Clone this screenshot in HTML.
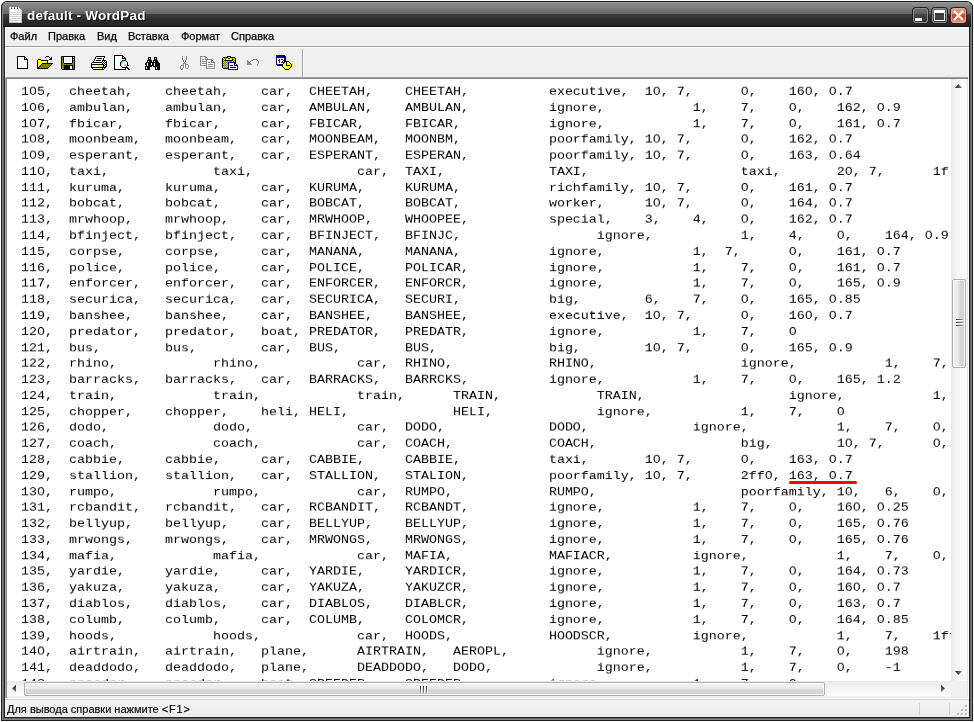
<!DOCTYPE html><html><head><meta charset="utf-8"><title>default - WordPad</title><style>
*{box-sizing:border-box;margin:0;padding:0}
html,body{width:974px;height:722px;background:#fff;overflow:hidden}
body{position:relative;font-family:"Liberation Sans",sans-serif;font-size:11px;color:#000}
.a{position:absolute}
/* window frame */
#root{left:0;top:0;width:974px;height:722px;will-change:transform}
#f0{left:1px;top:1px;width:972px;height:720px;background:#1c1c1c;border-radius:6px 6px 0 0}
#f1{left:2px;top:2px;width:970px;height:718px;background:#858585;border-radius:5px 5px 0 0}
#f2{left:3px;top:3px;width:968px;height:716px;background:#626262;border-radius:4px 4px 0 0}
#f3{left:4px;top:4px;width:966px;height:714px;background:#242424}
#title{left:3px;top:2px;width:968px;height:25px;border-radius:4px 4px 0 0;
 background:linear-gradient(to bottom,#9c9c9c 0,#9c9c9c 1px,#8c8c8c 1px,#7c7c7c 6px,#686868 11px,#646464 12px,#3e3e3e 12px,#2c2c2c 18px,#232323 24px,#0c0c0c 24px,#0c0c0c 25px)}
#ttext{left:27px;top:7px;height:18px;line-height:18px;font-weight:bold;font-size:13.5px;letter-spacing:0.2px;color:#fff;white-space:pre;
 text-shadow:1px 1px 0 #111;transform-origin:0 50%}
#client{left:5px;top:27px;width:964px;height:690px;background:#f0f0f0}
.mi{top:30px;height:13px;line-height:13px;font-size:11px;white-space:pre;-webkit-text-stroke:0.25px #000}
#edit{left:7px;top:79px;width:944px;height:602px;background:#fff;overflow:hidden}
#txt{left:14px;top:5px;will-change:transform;font-family:"Liberation Mono",monospace;font-size:13.3333px;line-height:17.7778px;white-space:pre;
 transform:scaleY(0.9);transform-origin:0 0;color:#000}
</style></head><body>
<div class="a" id="root">
<div class="a" id="f0"></div><div class="a" id="f1"></div><div class="a" id="f2"></div><div class="a" id="f3"></div>
<div class="a" id="title"></div>
<svg class="a" style="left:8px;top:6px" width="16" height="18" viewBox="8 6 16 18" shape-rendering="crispEdges"><rect x="9" y="7" width="13" height="16" fill="#c4c4c4"/><rect x="10" y="7" width="11" height="15" fill="#fdfdfd"/><rect x="10" y="12" width="11" height="1" fill="#c6d6e2"/><rect x="10" y="14" width="11" height="1" fill="#c6d6e2"/><rect x="10" y="16" width="11" height="1" fill="#c6d6e2"/><rect x="10" y="18" width="11" height="1" fill="#c6d6e2"/><rect x="10" y="20" width="11" height="1" fill="#c6d6e2"/><rect x="11" y="8" width="1" height="1" fill="#3a3a3a"/><rect x="11" y="7" width="1" height="1" fill="#9a9a9a"/><rect x="14" y="8" width="1" height="1" fill="#3a3a3a"/><rect x="14" y="7" width="1" height="1" fill="#9a9a9a"/><rect x="17" y="8" width="1" height="1" fill="#3a3a3a"/><rect x="17" y="7" width="1" height="1" fill="#9a9a9a"/><polygon points="18,7 22,7 22,11" fill="#7e7e7e"/><polygon points="18,7 18,11 22,11" fill="#d8d8d8"/><rect x="19" y="9" width="1" height="1" fill="#fff"/></svg>
<div class="a" id="ttext">default - WordPad</div>
<div class="a" style="left:912px;top:7px;width:17px;height:17px;border-radius:4px;background:#222"></div><div class="a" style="left:913px;top:8px;width:15px;height:15px;border-radius:3px;background:#8c8c8c"></div><div class="a" style="left:914px;top:9px;width:13px;height:13px;border-radius:2px;background:linear-gradient(to bottom,#6c6c6c 0,#5e5e5e 38%,#444 42%,#343434 100%)"></div><div class="a" style="left:915px;top:18px;width:7px;height:3px;background:#fff"></div><div class="a" style="left:931px;top:7px;width:17px;height:17px;border-radius:4px;background:#222"></div><div class="a" style="left:932px;top:8px;width:15px;height:15px;border-radius:3px;background:#8c8c8c"></div><div class="a" style="left:933px;top:9px;width:13px;height:13px;border-radius:2px;background:linear-gradient(to bottom,#6c6c6c 0,#5e5e5e 38%,#444 42%,#343434 100%)"></div><div class="a" style="left:934px;top:10px;width:11px;height:11px;border:1px solid #fff;border-top-width:3px;background:#404040"></div><div class="a" style="left:950px;top:7px;width:17px;height:17px;border-radius:4px;background:#222"></div><div class="a" style="left:951px;top:8px;width:15px;height:15px;border-radius:3px;background:#f0a494"></div><div class="a" style="left:952px;top:9px;width:13px;height:13px;border-radius:2px;background:linear-gradient(to bottom,#de9a88 0,#d98672 38%,#dd4a1a 42%,#dc4c1c 66%,#e27a5c 84%,#e99580 100%)"></div><svg class="a" style="left:951px;top:8px" width="15" height="15" viewBox="0 0 15 15"><path d="M3 3 L12 12 M12 3 L3 12" stroke="#fff" stroke-width="2.2" stroke-linecap="butt"/></svg>
<div class="a" id="client"></div>
<div class="a" style="left:5px;top:27px;width:964px;height:1px;background:#fff"></div>
<div class="a" style="left:5px;top:27px;width:1px;height:50px;background:#fff"></div>
<div class="a mi" style="left:10px">Файл</div>
<div class="a mi" style="left:48px">Правка</div>
<div class="a mi" style="left:97px">Вид</div>
<div class="a mi" style="left:128px">Вставка</div>
<div class="a mi" style="left:181px">Формат</div>
<div class="a mi" style="left:231px">Справка</div>
<div class="a" style="left:5px;top:46px;width:964px;height:1px;background:#a0a0a0"></div>
<div class="a" style="left:5px;top:47px;width:964px;height:1px;background:#fff"></div>
<div class="a" style="left:302px;top:49px;width:1px;height:28px;background:#a0a0a0"></div>
<div class="a" style="left:303px;top:49px;width:1px;height:28px;background:#fff"></div>
<svg class="a" style="left:0;top:48px" width="310" height="29" viewBox="0 48 310 29" shape-rendering="crispEdges"><rect x="17" y="56" width="8" height="1" fill="#000"/><rect x="17" y="57" width="1" height="1" fill="#000"/><rect x="18" y="57" width="6" height="1" fill="#fff"/><rect x="24" y="57" width="2" height="1" fill="#000"/><rect x="17" y="58" width="1" height="1" fill="#000"/><rect x="18" y="58" width="6" height="1" fill="#fff"/><rect x="24" y="58" width="1" height="1" fill="#000"/><rect x="25" y="58" width="1" height="1" fill="#fff"/><rect x="26" y="58" width="1" height="1" fill="#000"/><rect x="17" y="59" width="1" height="1" fill="#000"/><rect x="18" y="59" width="6" height="1" fill="#fff"/><rect x="24" y="59" width="4" height="1" fill="#000"/><rect x="17" y="60" width="1" height="1" fill="#000"/><rect x="18" y="60" width="9" height="1" fill="#fff"/><rect x="27" y="60" width="1" height="1" fill="#000"/><rect x="17" y="61" width="1" height="1" fill="#000"/><rect x="18" y="61" width="9" height="1" fill="#fff"/><rect x="27" y="61" width="1" height="1" fill="#000"/><rect x="17" y="62" width="1" height="1" fill="#000"/><rect x="18" y="62" width="9" height="1" fill="#fff"/><rect x="27" y="62" width="1" height="1" fill="#000"/><rect x="17" y="63" width="1" height="1" fill="#000"/><rect x="18" y="63" width="9" height="1" fill="#fff"/><rect x="27" y="63" width="1" height="1" fill="#000"/><rect x="17" y="64" width="1" height="1" fill="#000"/><rect x="18" y="64" width="9" height="1" fill="#fff"/><rect x="27" y="64" width="1" height="1" fill="#000"/><rect x="17" y="65" width="1" height="1" fill="#000"/><rect x="18" y="65" width="9" height="1" fill="#fff"/><rect x="27" y="65" width="1" height="1" fill="#000"/><rect x="17" y="66" width="1" height="1" fill="#000"/><rect x="18" y="66" width="9" height="1" fill="#fff"/><rect x="27" y="66" width="1" height="1" fill="#000"/><rect x="17" y="67" width="1" height="1" fill="#000"/><rect x="18" y="67" width="9" height="1" fill="#fff"/><rect x="27" y="67" width="1" height="1" fill="#000"/><rect x="17" y="68" width="11" height="1" fill="#000"/><rect x="46" y="56" width="3" height="1" fill="#000"/><rect x="45" y="57" width="1" height="1" fill="#000"/><rect x="49" y="57" width="1" height="1" fill="#000"/><rect x="51" y="57" width="1" height="1" fill="#000"/><rect x="50" y="58" width="2" height="1" fill="#000"/><rect x="38" y="59" width="3" height="1" fill="#000"/><rect x="49" y="59" width="3" height="1" fill="#000"/><rect x="37" y="60" width="1" height="1" fill="#000"/><rect x="38" y="60" width="1" height="1" fill="#ffff00"/><rect x="39" y="60" width="1" height="1" fill="#fff"/><rect x="40" y="60" width="1" height="1" fill="#ffff00"/><rect x="41" y="60" width="7" height="1" fill="#000"/><rect x="37" y="61" width="1" height="1" fill="#000"/><rect x="38" y="61" width="1" height="1" fill="#fff"/><rect x="39" y="61" width="1" height="1" fill="#ffff00"/><rect x="40" y="61" width="1" height="1" fill="#fff"/><rect x="41" y="61" width="1" height="1" fill="#ffff00"/><rect x="42" y="61" width="1" height="1" fill="#fff"/><rect x="43" y="61" width="1" height="1" fill="#ffff00"/><rect x="44" y="61" width="1" height="1" fill="#fff"/><rect x="45" y="61" width="1" height="1" fill="#ffff00"/><rect x="46" y="61" width="1" height="1" fill="#fff"/><rect x="47" y="61" width="1" height="1" fill="#000"/><rect x="37" y="62" width="1" height="1" fill="#000"/><rect x="38" y="62" width="1" height="1" fill="#ffff00"/><rect x="39" y="62" width="1" height="1" fill="#fff"/><rect x="40" y="62" width="1" height="1" fill="#ffff00"/><rect x="41" y="62" width="1" height="1" fill="#fff"/><rect x="42" y="62" width="1" height="1" fill="#ffff00"/><rect x="43" y="62" width="1" height="1" fill="#fff"/><rect x="44" y="62" width="1" height="1" fill="#ffff00"/><rect x="45" y="62" width="1" height="1" fill="#fff"/><rect x="46" y="62" width="1" height="1" fill="#ffff00"/><rect x="47" y="62" width="1" height="1" fill="#000"/><rect x="37" y="63" width="1" height="1" fill="#000"/><rect x="38" y="63" width="1" height="1" fill="#fff"/><rect x="39" y="63" width="1" height="1" fill="#ffff00"/><rect x="40" y="63" width="1" height="1" fill="#fff"/><rect x="41" y="63" width="1" height="1" fill="#ffff00"/><rect x="42" y="63" width="11" height="1" fill="#000"/><rect x="37" y="64" width="1" height="1" fill="#000"/><rect x="38" y="64" width="1" height="1" fill="#ffff00"/><rect x="39" y="64" width="1" height="1" fill="#fff"/><rect x="40" y="64" width="1" height="1" fill="#ffff00"/><rect x="41" y="64" width="1" height="1" fill="#000"/><rect x="42" y="64" width="9" height="1" fill="#808000"/><rect x="51" y="64" width="1" height="1" fill="#000"/><rect x="37" y="65" width="1" height="1" fill="#000"/><rect x="38" y="65" width="1" height="1" fill="#fff"/><rect x="39" y="65" width="1" height="1" fill="#ffff00"/><rect x="40" y="65" width="1" height="1" fill="#000"/><rect x="41" y="65" width="9" height="1" fill="#808000"/><rect x="50" y="65" width="1" height="1" fill="#000"/><rect x="37" y="66" width="1" height="1" fill="#000"/><rect x="38" y="66" width="1" height="1" fill="#ffff00"/><rect x="39" y="66" width="1" height="1" fill="#000"/><rect x="40" y="66" width="9" height="1" fill="#808000"/><rect x="49" y="66" width="1" height="1" fill="#000"/><rect x="37" y="67" width="2" height="1" fill="#000"/><rect x="39" y="67" width="9" height="1" fill="#808000"/><rect x="48" y="67" width="1" height="1" fill="#000"/><rect x="37" y="68" width="11" height="1" fill="#000"/><rect x="61" y="56" width="14" height="1" fill="#000"/><rect x="61" y="57" width="1" height="1" fill="#000"/><rect x="62" y="57" width="1" height="1" fill="#808000"/><rect x="63" y="57" width="1" height="1" fill="#000"/><rect x="64" y="57" width="8" height="1" fill="#fff"/><rect x="72" y="57" width="1" height="1" fill="#000"/><rect x="73" y="57" width="1" height="1" fill="#fff"/><rect x="74" y="57" width="1" height="1" fill="#000"/><rect x="61" y="58" width="1" height="1" fill="#000"/><rect x="62" y="58" width="1" height="1" fill="#808000"/><rect x="63" y="58" width="1" height="1" fill="#000"/><rect x="64" y="58" width="1" height="1" fill="#fff"/><rect x="65" y="58" width="6" height="1" fill="#f0f0f0"/><rect x="71" y="58" width="1" height="1" fill="#fff"/><rect x="72" y="58" width="3" height="1" fill="#000"/><rect x="61" y="59" width="1" height="1" fill="#000"/><rect x="62" y="59" width="1" height="1" fill="#808000"/><rect x="63" y="59" width="1" height="1" fill="#000"/><rect x="64" y="59" width="1" height="1" fill="#fff"/><rect x="65" y="59" width="6" height="1" fill="#f0f0f0"/><rect x="71" y="59" width="1" height="1" fill="#fff"/><rect x="72" y="59" width="1" height="1" fill="#000"/><rect x="73" y="59" width="1" height="1" fill="#808000"/><rect x="74" y="59" width="1" height="1" fill="#000"/><rect x="61" y="60" width="1" height="1" fill="#000"/><rect x="62" y="60" width="1" height="1" fill="#808000"/><rect x="63" y="60" width="1" height="1" fill="#000"/><rect x="64" y="60" width="1" height="1" fill="#fff"/><rect x="65" y="60" width="6" height="1" fill="#f0f0f0"/><rect x="71" y="60" width="1" height="1" fill="#fff"/><rect x="72" y="60" width="1" height="1" fill="#000"/><rect x="73" y="60" width="1" height="1" fill="#808000"/><rect x="74" y="60" width="1" height="1" fill="#000"/><rect x="61" y="61" width="1" height="1" fill="#000"/><rect x="62" y="61" width="1" height="1" fill="#808000"/><rect x="63" y="61" width="1" height="1" fill="#000"/><rect x="64" y="61" width="1" height="1" fill="#fff"/><rect x="65" y="61" width="6" height="1" fill="#f0f0f0"/><rect x="71" y="61" width="1" height="1" fill="#fff"/><rect x="72" y="61" width="1" height="1" fill="#000"/><rect x="73" y="61" width="1" height="1" fill="#808000"/><rect x="74" y="61" width="1" height="1" fill="#000"/><rect x="61" y="62" width="1" height="1" fill="#000"/><rect x="62" y="62" width="1" height="1" fill="#808000"/><rect x="63" y="62" width="1" height="1" fill="#000"/><rect x="64" y="62" width="8" height="1" fill="#fff"/><rect x="72" y="62" width="1" height="1" fill="#000"/><rect x="73" y="62" width="1" height="1" fill="#808000"/><rect x="74" y="62" width="1" height="1" fill="#000"/><rect x="61" y="63" width="1" height="1" fill="#000"/><rect x="62" y="63" width="2" height="1" fill="#808000"/><rect x="64" y="63" width="8" height="1" fill="#000"/><rect x="72" y="63" width="2" height="1" fill="#808000"/><rect x="74" y="63" width="1" height="1" fill="#000"/><rect x="61" y="64" width="1" height="1" fill="#000"/><rect x="62" y="64" width="12" height="1" fill="#808000"/><rect x="74" y="64" width="1" height="1" fill="#000"/><rect x="61" y="65" width="1" height="1" fill="#000"/><rect x="62" y="65" width="2" height="1" fill="#808000"/><rect x="64" y="65" width="9" height="1" fill="#000"/><rect x="73" y="65" width="1" height="1" fill="#808000"/><rect x="74" y="65" width="1" height="1" fill="#000"/><rect x="61" y="66" width="1" height="1" fill="#000"/><rect x="62" y="66" width="2" height="1" fill="#808000"/><rect x="64" y="66" width="6" height="1" fill="#000"/><rect x="70" y="66" width="2" height="1" fill="#fff"/><rect x="72" y="66" width="1" height="1" fill="#000"/><rect x="73" y="66" width="1" height="1" fill="#808000"/><rect x="74" y="66" width="1" height="1" fill="#000"/><rect x="61" y="67" width="1" height="1" fill="#000"/><rect x="62" y="67" width="2" height="1" fill="#808000"/><rect x="64" y="67" width="6" height="1" fill="#000"/><rect x="70" y="67" width="2" height="1" fill="#fff"/><rect x="72" y="67" width="1" height="1" fill="#000"/><rect x="73" y="67" width="1" height="1" fill="#808000"/><rect x="74" y="67" width="1" height="1" fill="#000"/><rect x="61" y="68" width="1" height="1" fill="#000"/><rect x="62" y="68" width="2" height="1" fill="#808000"/><rect x="64" y="68" width="6" height="1" fill="#000"/><rect x="70" y="68" width="2" height="1" fill="#fff"/><rect x="72" y="68" width="1" height="1" fill="#000"/><rect x="73" y="68" width="1" height="1" fill="#808000"/><rect x="74" y="68" width="1" height="1" fill="#000"/><rect x="62" y="69" width="13" height="1" fill="#000"/><rect x="96" y="56" width="9" height="1" fill="#000"/><rect x="95" y="57" width="1" height="1" fill="#000"/><rect x="96" y="57" width="8" height="1" fill="#fff"/><rect x="104" y="57" width="1" height="1" fill="#000"/><rect x="95" y="58" width="1" height="1" fill="#000"/><rect x="96" y="58" width="1" height="1" fill="#fff"/><rect x="97" y="58" width="5" height="1" fill="#000"/><rect x="102" y="58" width="1" height="1" fill="#fff"/><rect x="103" y="58" width="1" height="1" fill="#000"/><rect x="94" y="59" width="1" height="1" fill="#000"/><rect x="95" y="59" width="8" height="1" fill="#fff"/><rect x="103" y="59" width="1" height="1" fill="#000"/><rect x="94" y="60" width="1" height="1" fill="#000"/><rect x="95" y="60" width="1" height="1" fill="#fff"/><rect x="96" y="60" width="5" height="1" fill="#000"/><rect x="101" y="60" width="1" height="1" fill="#fff"/><rect x="102" y="60" width="4" height="1" fill="#000"/><rect x="93" y="61" width="1" height="1" fill="#000"/><rect x="94" y="61" width="8" height="1" fill="#fff"/><rect x="102" y="61" width="1" height="1" fill="#000"/><rect x="103" y="61" width="1" height="1" fill="#fff"/><rect x="104" y="61" width="1" height="1" fill="#000"/><rect x="105" y="61" width="1" height="1" fill="#fff"/><rect x="106" y="61" width="1" height="1" fill="#000"/><rect x="92" y="62" width="10" height="1" fill="#000"/><rect x="102" y="62" width="1" height="1" fill="#fff"/><rect x="103" y="62" width="1" height="1" fill="#000"/><rect x="104" y="62" width="1" height="1" fill="#fff"/><rect x="105" y="62" width="2" height="1" fill="#000"/><rect x="91" y="63" width="1" height="1" fill="#000"/><rect x="92" y="63" width="10" height="1" fill="#fff"/><rect x="102" y="63" width="1" height="1" fill="#000"/><rect x="103" y="63" width="1" height="1" fill="#fff"/><rect x="104" y="63" width="1" height="1" fill="#000"/><rect x="105" y="63" width="1" height="1" fill="#fff"/><rect x="106" y="63" width="1" height="1" fill="#000"/><rect x="91" y="64" width="13" height="1" fill="#000"/><rect x="104" y="64" width="1" height="1" fill="#fff"/><rect x="105" y="64" width="2" height="1" fill="#000"/><rect x="91" y="65" width="1" height="1" fill="#000"/><rect x="92" y="65" width="6" height="1" fill="#fff"/><rect x="98" y="65" width="3" height="1" fill="#ffff00"/><rect x="101" y="65" width="2" height="1" fill="#fff"/><rect x="103" y="65" width="2" height="1" fill="#000"/><rect x="105" y="65" width="1" height="1" fill="#fff"/><rect x="106" y="65" width="1" height="1" fill="#000"/><rect x="91" y="66" width="1" height="1" fill="#000"/><rect x="92" y="66" width="6" height="1" fill="#fff"/><rect x="98" y="66" width="3" height="1" fill="#ffff00"/><rect x="101" y="66" width="2" height="1" fill="#fff"/><rect x="103" y="66" width="1" height="1" fill="#000"/><rect x="104" y="66" width="1" height="1" fill="#fff"/><rect x="105" y="66" width="2" height="1" fill="#000"/><rect x="91" y="67" width="15" height="1" fill="#000"/><rect x="92" y="68" width="1" height="1" fill="#000"/><rect x="93" y="68" width="9" height="1" fill="#fff"/><rect x="102" y="68" width="1" height="1" fill="#000"/><rect x="103" y="68" width="1" height="1" fill="#fff"/><rect x="104" y="68" width="1" height="1" fill="#000"/><rect x="93" y="69" width="11" height="1" fill="#000"/><rect x="114" y="55" width="9" height="1" fill="#000"/><rect x="114" y="56" width="1" height="1" fill="#000"/><rect x="115" y="56" width="7" height="1" fill="#fff"/><rect x="122" y="56" width="2" height="1" fill="#000"/><rect x="114" y="57" width="1" height="1" fill="#000"/><rect x="115" y="57" width="7" height="1" fill="#fff"/><rect x="122" y="57" width="1" height="1" fill="#000"/><rect x="123" y="57" width="1" height="1" fill="#fff"/><rect x="124" y="57" width="1" height="1" fill="#000"/><rect x="114" y="58" width="1" height="1" fill="#000"/><rect x="115" y="58" width="7" height="1" fill="#fff"/><rect x="122" y="58" width="4" height="1" fill="#000"/><rect x="114" y="59" width="1" height="1" fill="#000"/><rect x="115" y="59" width="10" height="1" fill="#fff"/><rect x="125" y="59" width="1" height="1" fill="#000"/><rect x="114" y="60" width="1" height="1" fill="#000"/><rect x="115" y="60" width="7" height="1" fill="#fff"/><rect x="122" y="60" width="4" height="1" fill="#000"/><rect x="114" y="61" width="1" height="1" fill="#000"/><rect x="115" y="61" width="6" height="1" fill="#fff"/><rect x="121" y="61" width="1" height="1" fill="#000"/><rect x="122" y="61" width="1" height="1" fill="#00ffff"/><rect x="123" y="61" width="1" height="1" fill="#fff"/><rect x="124" y="61" width="2" height="1" fill="#f6eeee"/><rect x="126" y="61" width="1" height="1" fill="#000"/><rect x="114" y="62" width="1" height="1" fill="#000"/><rect x="115" y="62" width="5" height="1" fill="#fff"/><rect x="120" y="62" width="1" height="1" fill="#000"/><rect x="121" y="62" width="2" height="1" fill="#00ffff"/><rect x="123" y="62" width="3" height="1" fill="#f6eeee"/><rect x="126" y="62" width="1" height="1" fill="#fff"/><rect x="127" y="62" width="1" height="1" fill="#000"/><rect x="114" y="63" width="1" height="1" fill="#000"/><rect x="115" y="63" width="5" height="1" fill="#fff"/><rect x="120" y="63" width="1" height="1" fill="#000"/><rect x="121" y="63" width="1" height="1" fill="#00ffff"/><rect x="122" y="63" width="1" height="1" fill="#fff"/><rect x="123" y="63" width="3" height="1" fill="#f6eeee"/><rect x="126" y="63" width="1" height="1" fill="#fff"/><rect x="127" y="63" width="1" height="1" fill="#000"/><rect x="114" y="64" width="1" height="1" fill="#000"/><rect x="115" y="64" width="5" height="1" fill="#fff"/><rect x="120" y="64" width="1" height="1" fill="#000"/><rect x="121" y="64" width="4" height="1" fill="#f6eeee"/><rect x="125" y="64" width="1" height="1" fill="#00ffff"/><rect x="126" y="64" width="1" height="1" fill="#fff"/><rect x="127" y="64" width="1" height="1" fill="#000"/><rect x="114" y="65" width="1" height="1" fill="#000"/><rect x="115" y="65" width="5" height="1" fill="#fff"/><rect x="120" y="65" width="1" height="1" fill="#000"/><rect x="121" y="65" width="3" height="1" fill="#f6eeee"/><rect x="124" y="65" width="2" height="1" fill="#00ffff"/><rect x="126" y="65" width="1" height="1" fill="#fff"/><rect x="127" y="65" width="2" height="1" fill="#000"/><rect x="114" y="66" width="1" height="1" fill="#000"/><rect x="115" y="66" width="6" height="1" fill="#fff"/><rect x="121" y="66" width="1" height="1" fill="#000"/><rect x="122" y="66" width="4" height="1" fill="#f6eeee"/><rect x="126" y="66" width="1" height="1" fill="#000"/><rect x="114" y="67" width="1" height="1" fill="#000"/><rect x="115" y="67" width="7" height="1" fill="#fff"/><rect x="122" y="67" width="6" height="1" fill="#000"/><rect x="114" y="68" width="1" height="1" fill="#000"/><rect x="115" y="68" width="10" height="1" fill="#fff"/><rect x="125" y="68" width="1" height="1" fill="#000"/><rect x="127" y="68" width="2" height="1" fill="#000"/><rect x="114" y="69" width="12" height="1" fill="#000"/><rect x="128" y="69" width="2" height="1" fill="#000"/><rect x="148" y="57" width="3" height="1" fill="#000"/><rect x="154" y="57" width="3" height="1" fill="#000"/><rect x="148" y="58" width="1" height="1" fill="#000"/><rect x="149" y="58" width="1" height="1" fill="#fff"/><rect x="150" y="58" width="1" height="1" fill="#000"/><rect x="154" y="58" width="1" height="1" fill="#000"/><rect x="155" y="58" width="1" height="1" fill="#fff"/><rect x="156" y="58" width="1" height="1" fill="#000"/><rect x="148" y="59" width="3" height="1" fill="#000"/><rect x="154" y="59" width="3" height="1" fill="#000"/><rect x="147" y="60" width="5" height="1" fill="#000"/><rect x="153" y="60" width="5" height="1" fill="#000"/><rect x="147" y="61" width="1" height="1" fill="#000"/><rect x="148" y="61" width="1" height="1" fill="#fff"/><rect x="149" y="61" width="3" height="1" fill="#000"/><rect x="153" y="61" width="1" height="1" fill="#000"/><rect x="154" y="61" width="1" height="1" fill="#fff"/><rect x="155" y="61" width="3" height="1" fill="#000"/><rect x="146" y="62" width="13" height="1" fill="#000"/><rect x="145" y="63" width="2" height="1" fill="#000"/><rect x="147" y="63" width="1" height="1" fill="#fff"/><rect x="148" y="63" width="3" height="1" fill="#000"/><rect x="151" y="63" width="1" height="1" fill="#fff"/><rect x="152" y="63" width="2" height="1" fill="#000"/><rect x="154" y="63" width="1" height="1" fill="#fff"/><rect x="155" y="63" width="5" height="1" fill="#000"/><rect x="145" y="64" width="2" height="1" fill="#000"/><rect x="147" y="64" width="1" height="1" fill="#fff"/><rect x="148" y="64" width="3" height="1" fill="#000"/><rect x="151" y="64" width="1" height="1" fill="#fff"/><rect x="152" y="64" width="2" height="1" fill="#000"/><rect x="154" y="64" width="1" height="1" fill="#fff"/><rect x="155" y="64" width="5" height="1" fill="#000"/><rect x="146" y="65" width="1" height="1" fill="#000"/><rect x="147" y="65" width="1" height="1" fill="#fff"/><rect x="148" y="65" width="6" height="1" fill="#000"/><rect x="154" y="65" width="1" height="1" fill="#fff"/><rect x="155" y="65" width="5" height="1" fill="#000"/><rect x="145" y="66" width="7" height="1" fill="#000"/><rect x="153" y="66" width="7" height="1" fill="#000"/><rect x="145" y="67" width="1" height="1" fill="#000"/><rect x="146" y="67" width="1" height="1" fill="#fff"/><rect x="147" y="67" width="3" height="1" fill="#000"/><rect x="155" y="67" width="1" height="1" fill="#000"/><rect x="156" y="67" width="1" height="1" fill="#fff"/><rect x="157" y="67" width="3" height="1" fill="#000"/><rect x="145" y="68" width="1" height="1" fill="#000"/><rect x="146" y="68" width="1" height="1" fill="#fff"/><rect x="147" y="68" width="3" height="1" fill="#000"/><rect x="155" y="68" width="1" height="1" fill="#000"/><rect x="156" y="68" width="1" height="1" fill="#fff"/><rect x="157" y="68" width="3" height="1" fill="#000"/><rect x="145" y="69" width="5" height="1" fill="#000"/><rect x="155" y="69" width="5" height="1" fill="#000"/><rect x="183" y="57" width="1" height="1" fill="#fff"/><rect x="187" y="57" width="1" height="1" fill="#fff"/><rect x="183" y="58" width="1" height="1" fill="#fff"/><rect x="187" y="58" width="1" height="1" fill="#fff"/><rect x="183" y="59" width="1" height="1" fill="#fff"/><rect x="187" y="59" width="1" height="1" fill="#fff"/><rect x="183" y="60" width="1" height="1" fill="#fff"/><rect x="187" y="60" width="1" height="1" fill="#fff"/><rect x="184" y="61" width="1" height="1" fill="#fff"/><rect x="186" y="61" width="1" height="1" fill="#fff"/><rect x="184" y="62" width="1" height="1" fill="#fff"/><rect x="186" y="62" width="1" height="1" fill="#fff"/><rect x="185" y="63" width="1" height="1" fill="#fff"/><rect x="184" y="64" width="3" height="1" fill="#fff"/><rect x="184" y="65" width="1" height="1" fill="#fff"/><rect x="186" y="65" width="3" height="1" fill="#fff"/><rect x="182" y="66" width="3" height="1" fill="#fff"/><rect x="186" y="66" width="1" height="1" fill="#fff"/><rect x="189" y="66" width="1" height="1" fill="#fff"/><rect x="181" y="67" width="1" height="1" fill="#fff"/><rect x="184" y="67" width="1" height="1" fill="#fff"/><rect x="186" y="67" width="1" height="1" fill="#fff"/><rect x="189" y="67" width="1" height="1" fill="#fff"/><rect x="181" y="68" width="1" height="1" fill="#fff"/><rect x="184" y="68" width="1" height="1" fill="#fff"/><rect x="186" y="68" width="1" height="1" fill="#fff"/><rect x="189" y="68" width="1" height="1" fill="#fff"/><rect x="181" y="69" width="1" height="1" fill="#fff"/><rect x="183" y="69" width="1" height="1" fill="#fff"/><rect x="187" y="69" width="2" height="1" fill="#fff"/><rect x="182" y="70" width="2" height="1" fill="#fff"/><rect x="182" y="56" width="1" height="1" fill="#8a8a92"/><rect x="186" y="56" width="1" height="1" fill="#8a8a92"/><rect x="182" y="57" width="1" height="1" fill="#8a8a92"/><rect x="186" y="57" width="1" height="1" fill="#8a8a92"/><rect x="182" y="58" width="1" height="1" fill="#8a8a92"/><rect x="186" y="58" width="1" height="1" fill="#8a8a92"/><rect x="182" y="59" width="1" height="1" fill="#8a8a92"/><rect x="186" y="59" width="1" height="1" fill="#8a8a92"/><rect x="183" y="60" width="1" height="1" fill="#8a8a92"/><rect x="185" y="60" width="1" height="1" fill="#8a8a92"/><rect x="183" y="61" width="1" height="1" fill="#8a8a92"/><rect x="185" y="61" width="1" height="1" fill="#8a8a92"/><rect x="184" y="62" width="1" height="1" fill="#8a8a92"/><rect x="183" y="63" width="3" height="1" fill="#8a8a92"/><rect x="183" y="64" width="1" height="1" fill="#8a8a92"/><rect x="185" y="64" width="3" height="1" fill="#8a8a92"/><rect x="181" y="65" width="3" height="1" fill="#8a8a92"/><rect x="185" y="65" width="1" height="1" fill="#8a8a92"/><rect x="188" y="65" width="1" height="1" fill="#8a8a92"/><rect x="180" y="66" width="1" height="1" fill="#8a8a92"/><rect x="183" y="66" width="1" height="1" fill="#8a8a92"/><rect x="185" y="66" width="1" height="1" fill="#8a8a92"/><rect x="188" y="66" width="1" height="1" fill="#8a8a92"/><rect x="180" y="67" width="1" height="1" fill="#8a8a92"/><rect x="183" y="67" width="1" height="1" fill="#8a8a92"/><rect x="185" y="67" width="1" height="1" fill="#8a8a92"/><rect x="188" y="67" width="1" height="1" fill="#8a8a92"/><rect x="180" y="68" width="1" height="1" fill="#8a8a92"/><rect x="182" y="68" width="1" height="1" fill="#8a8a92"/><rect x="186" y="68" width="2" height="1" fill="#8a8a92"/><rect x="181" y="69" width="2" height="1" fill="#8a8a92"/><rect x="201" y="57" width="6" height="1" fill="#fff"/><rect x="201" y="58" width="1" height="1" fill="#fff"/><rect x="206" y="58" width="2" height="1" fill="#fff"/><rect x="201" y="59" width="1" height="1" fill="#fff"/><rect x="206" y="59" width="1" height="1" fill="#fff"/><rect x="208" y="59" width="1" height="1" fill="#fff"/><rect x="201" y="60" width="1" height="1" fill="#fff"/><rect x="203" y="60" width="2" height="1" fill="#fff"/><rect x="206" y="60" width="7" height="1" fill="#fff"/><rect x="201" y="61" width="1" height="1" fill="#fff"/><rect x="207" y="61" width="1" height="1" fill="#fff"/><rect x="212" y="61" width="2" height="1" fill="#fff"/><rect x="201" y="62" width="1" height="1" fill="#fff"/><rect x="203" y="62" width="5" height="1" fill="#fff"/><rect x="212" y="62" width="1" height="1" fill="#fff"/><rect x="214" y="62" width="1" height="1" fill="#fff"/><rect x="201" y="63" width="1" height="1" fill="#fff"/><rect x="207" y="63" width="1" height="1" fill="#fff"/><rect x="209" y="63" width="2" height="1" fill="#fff"/><rect x="212" y="63" width="4" height="1" fill="#fff"/><rect x="201" y="64" width="1" height="1" fill="#fff"/><rect x="203" y="64" width="5" height="1" fill="#fff"/><rect x="215" y="64" width="1" height="1" fill="#fff"/><rect x="201" y="65" width="1" height="1" fill="#fff"/><rect x="207" y="65" width="1" height="1" fill="#fff"/><rect x="209" y="65" width="5" height="1" fill="#fff"/><rect x="215" y="65" width="1" height="1" fill="#fff"/><rect x="201" y="66" width="7" height="1" fill="#fff"/><rect x="215" y="66" width="1" height="1" fill="#fff"/><rect x="207" y="67" width="1" height="1" fill="#fff"/><rect x="209" y="67" width="5" height="1" fill="#fff"/><rect x="215" y="67" width="1" height="1" fill="#fff"/><rect x="207" y="68" width="1" height="1" fill="#fff"/><rect x="215" y="68" width="1" height="1" fill="#fff"/><rect x="207" y="69" width="9" height="1" fill="#fff"/><rect x="200" y="56" width="6" height="1" fill="#8a8a92"/><rect x="200" y="57" width="1" height="1" fill="#8a8a92"/><rect x="205" y="57" width="2" height="1" fill="#8a8a92"/><rect x="200" y="58" width="1" height="1" fill="#8a8a92"/><rect x="205" y="58" width="1" height="1" fill="#8a8a92"/><rect x="207" y="58" width="1" height="1" fill="#8a8a92"/><rect x="200" y="59" width="1" height="1" fill="#8a8a92"/><rect x="202" y="59" width="2" height="1" fill="#8a8a92"/><rect x="205" y="59" width="7" height="1" fill="#8a8a92"/><rect x="200" y="60" width="1" height="1" fill="#8a8a92"/><rect x="206" y="60" width="1" height="1" fill="#8a8a92"/><rect x="211" y="60" width="2" height="1" fill="#8a8a92"/><rect x="200" y="61" width="1" height="1" fill="#8a8a92"/><rect x="202" y="61" width="5" height="1" fill="#8a8a92"/><rect x="211" y="61" width="1" height="1" fill="#8a8a92"/><rect x="213" y="61" width="1" height="1" fill="#8a8a92"/><rect x="200" y="62" width="1" height="1" fill="#8a8a92"/><rect x="206" y="62" width="1" height="1" fill="#8a8a92"/><rect x="208" y="62" width="2" height="1" fill="#8a8a92"/><rect x="211" y="62" width="4" height="1" fill="#8a8a92"/><rect x="200" y="63" width="1" height="1" fill="#8a8a92"/><rect x="202" y="63" width="5" height="1" fill="#8a8a92"/><rect x="214" y="63" width="1" height="1" fill="#8a8a92"/><rect x="200" y="64" width="1" height="1" fill="#8a8a92"/><rect x="206" y="64" width="1" height="1" fill="#8a8a92"/><rect x="208" y="64" width="5" height="1" fill="#8a8a92"/><rect x="214" y="64" width="1" height="1" fill="#8a8a92"/><rect x="200" y="65" width="7" height="1" fill="#8a8a92"/><rect x="214" y="65" width="1" height="1" fill="#8a8a92"/><rect x="206" y="66" width="1" height="1" fill="#8a8a92"/><rect x="208" y="66" width="5" height="1" fill="#8a8a92"/><rect x="214" y="66" width="1" height="1" fill="#8a8a92"/><rect x="206" y="67" width="1" height="1" fill="#8a8a92"/><rect x="214" y="67" width="1" height="1" fill="#8a8a92"/><rect x="206" y="68" width="9" height="1" fill="#8a8a92"/><rect x="227" y="56" width="4" height="1" fill="#000"/><rect x="223" y="57" width="5" height="1" fill="#000"/><rect x="228" y="57" width="2" height="1" fill="#ffff00"/><rect x="230" y="57" width="5" height="1" fill="#000"/><rect x="222" y="58" width="1" height="1" fill="#000"/><rect x="223" y="58" width="1" height="1" fill="#c0c0c0"/><rect x="224" y="58" width="1" height="1" fill="#808000"/><rect x="225" y="58" width="1" height="1" fill="#c0c0c0"/><rect x="226" y="58" width="1" height="1" fill="#808000"/><rect x="227" y="58" width="1" height="1" fill="#ffff00"/><rect x="228" y="58" width="2" height="1" fill="#000"/><rect x="230" y="58" width="1" height="1" fill="#ffff00"/><rect x="231" y="58" width="1" height="1" fill="#c0c0c0"/><rect x="232" y="58" width="1" height="1" fill="#808000"/><rect x="233" y="58" width="1" height="1" fill="#c0c0c0"/><rect x="234" y="58" width="1" height="1" fill="#808000"/><rect x="235" y="58" width="1" height="1" fill="#000"/><rect x="222" y="59" width="1" height="1" fill="#000"/><rect x="223" y="59" width="1" height="1" fill="#808000"/><rect x="224" y="59" width="1" height="1" fill="#c0c0c0"/><rect x="225" y="59" width="1" height="1" fill="#000"/><rect x="226" y="59" width="6" height="1" fill="#fff"/><rect x="232" y="59" width="1" height="1" fill="#000"/><rect x="233" y="59" width="1" height="1" fill="#808000"/><rect x="234" y="59" width="1" height="1" fill="#c0c0c0"/><rect x="235" y="59" width="1" height="1" fill="#000"/><rect x="222" y="60" width="1" height="1" fill="#000"/><rect x="223" y="60" width="1" height="1" fill="#c0c0c0"/><rect x="224" y="60" width="1" height="1" fill="#808000"/><rect x="225" y="60" width="8" height="1" fill="#000"/><rect x="233" y="60" width="1" height="1" fill="#c0c0c0"/><rect x="234" y="60" width="1" height="1" fill="#808000"/><rect x="235" y="60" width="1" height="1" fill="#000"/><rect x="222" y="61" width="1" height="1" fill="#000"/><rect x="223" y="61" width="1" height="1" fill="#808000"/><rect x="224" y="61" width="1" height="1" fill="#c0c0c0"/><rect x="225" y="61" width="1" height="1" fill="#808000"/><rect x="226" y="61" width="1" height="1" fill="#c0c0c0"/><rect x="227" y="61" width="1" height="1" fill="#808000"/><rect x="228" y="61" width="1" height="1" fill="#c0c0c0"/><rect x="229" y="61" width="1" height="1" fill="#808000"/><rect x="230" y="61" width="1" height="1" fill="#c0c0c0"/><rect x="231" y="61" width="1" height="1" fill="#808000"/><rect x="232" y="61" width="1" height="1" fill="#c0c0c0"/><rect x="233" y="61" width="1" height="1" fill="#808000"/><rect x="234" y="61" width="1" height="1" fill="#c0c0c0"/><rect x="235" y="61" width="1" height="1" fill="#000"/><rect x="222" y="62" width="1" height="1" fill="#000"/><rect x="223" y="62" width="1" height="1" fill="#c0c0c0"/><rect x="224" y="62" width="1" height="1" fill="#808000"/><rect x="225" y="62" width="1" height="1" fill="#c0c0c0"/><rect x="226" y="62" width="1" height="1" fill="#808000"/><rect x="227" y="62" width="1" height="1" fill="#c0c0c0"/><rect x="228" y="62" width="7" height="1" fill="#000080"/><rect x="235" y="62" width="1" height="1" fill="#000"/><rect x="222" y="63" width="1" height="1" fill="#000"/><rect x="223" y="63" width="1" height="1" fill="#808000"/><rect x="224" y="63" width="1" height="1" fill="#c0c0c0"/><rect x="225" y="63" width="1" height="1" fill="#808000"/><rect x="226" y="63" width="1" height="1" fill="#c0c0c0"/><rect x="227" y="63" width="1" height="1" fill="#808000"/><rect x="228" y="63" width="1" height="1" fill="#000080"/><rect x="229" y="63" width="5" height="1" fill="#fff"/><rect x="234" y="63" width="2" height="1" fill="#000080"/><rect x="222" y="64" width="1" height="1" fill="#000"/><rect x="223" y="64" width="1" height="1" fill="#c0c0c0"/><rect x="224" y="64" width="1" height="1" fill="#808000"/><rect x="225" y="64" width="1" height="1" fill="#c0c0c0"/><rect x="226" y="64" width="1" height="1" fill="#808000"/><rect x="227" y="64" width="1" height="1" fill="#c0c0c0"/><rect x="228" y="64" width="1" height="1" fill="#000080"/><rect x="229" y="64" width="5" height="1" fill="#fff"/><rect x="234" y="64" width="1" height="1" fill="#000080"/><rect x="235" y="64" width="1" height="1" fill="#fff"/><rect x="236" y="64" width="1" height="1" fill="#000080"/><rect x="222" y="65" width="1" height="1" fill="#000"/><rect x="223" y="65" width="1" height="1" fill="#808000"/><rect x="224" y="65" width="1" height="1" fill="#c0c0c0"/><rect x="225" y="65" width="1" height="1" fill="#808000"/><rect x="226" y="65" width="1" height="1" fill="#c0c0c0"/><rect x="227" y="65" width="1" height="1" fill="#808000"/><rect x="228" y="65" width="1" height="1" fill="#000080"/><rect x="229" y="65" width="1" height="1" fill="#fff"/><rect x="230" y="65" width="3" height="1" fill="#000"/><rect x="233" y="65" width="1" height="1" fill="#fff"/><rect x="234" y="65" width="4" height="1" fill="#000080"/><rect x="222" y="66" width="1" height="1" fill="#000"/><rect x="223" y="66" width="1" height="1" fill="#c0c0c0"/><rect x="224" y="66" width="1" height="1" fill="#808000"/><rect x="225" y="66" width="1" height="1" fill="#c0c0c0"/><rect x="226" y="66" width="1" height="1" fill="#808000"/><rect x="227" y="66" width="1" height="1" fill="#c0c0c0"/><rect x="228" y="66" width="1" height="1" fill="#000080"/><rect x="229" y="66" width="8" height="1" fill="#fff"/><rect x="237" y="66" width="1" height="1" fill="#000080"/><rect x="222" y="67" width="1" height="1" fill="#000"/><rect x="223" y="67" width="1" height="1" fill="#808000"/><rect x="224" y="67" width="1" height="1" fill="#c0c0c0"/><rect x="225" y="67" width="1" height="1" fill="#808000"/><rect x="226" y="67" width="1" height="1" fill="#c0c0c0"/><rect x="227" y="67" width="1" height="1" fill="#808000"/><rect x="228" y="67" width="1" height="1" fill="#000080"/><rect x="229" y="67" width="1" height="1" fill="#fff"/><rect x="230" y="67" width="6" height="1" fill="#000"/><rect x="236" y="67" width="1" height="1" fill="#fff"/><rect x="237" y="67" width="1" height="1" fill="#000080"/><rect x="223" y="68" width="5" height="1" fill="#000"/><rect x="228" y="68" width="1" height="1" fill="#000080"/><rect x="229" y="68" width="8" height="1" fill="#fff"/><rect x="237" y="68" width="1" height="1" fill="#000080"/><rect x="228" y="69" width="10" height="1" fill="#000080"/><rect x="254" y="60" width="4" height="1" fill="#fff"/><rect x="248" y="61" width="1" height="1" fill="#fff"/><rect x="252" y="61" width="2" height="1" fill="#fff"/><rect x="258" y="61" width="1" height="1" fill="#fff"/><rect x="248" y="62" width="2" height="1" fill="#fff"/><rect x="251" y="62" width="1" height="1" fill="#fff"/><rect x="259" y="62" width="1" height="1" fill="#fff"/><rect x="248" y="63" width="3" height="1" fill="#fff"/><rect x="259" y="63" width="1" height="1" fill="#fff"/><rect x="248" y="64" width="4" height="1" fill="#fff"/><rect x="259" y="64" width="1" height="1" fill="#fff"/><rect x="248" y="65" width="5" height="1" fill="#fff"/><rect x="258" y="65" width="1" height="1" fill="#fff"/><rect x="258" y="66" width="1" height="1" fill="#fff"/><rect x="253" y="59" width="4" height="1" fill="#8a8a92"/><rect x="247" y="60" width="1" height="1" fill="#8a8a92"/><rect x="251" y="60" width="2" height="1" fill="#8a8a92"/><rect x="257" y="60" width="1" height="1" fill="#8a8a92"/><rect x="247" y="61" width="2" height="1" fill="#8a8a92"/><rect x="250" y="61" width="1" height="1" fill="#8a8a92"/><rect x="258" y="61" width="1" height="1" fill="#8a8a92"/><rect x="247" y="62" width="3" height="1" fill="#8a8a92"/><rect x="258" y="62" width="1" height="1" fill="#8a8a92"/><rect x="247" y="63" width="4" height="1" fill="#8a8a92"/><rect x="258" y="63" width="1" height="1" fill="#8a8a92"/><rect x="247" y="64" width="5" height="1" fill="#8a8a92"/><rect x="257" y="64" width="1" height="1" fill="#8a8a92"/><rect x="257" y="65" width="1" height="1" fill="#8a8a92"/><rect x="276" y="55" width="9" height="1" fill="#000080"/><rect x="276" y="56" width="1" height="1" fill="#000080"/><rect x="277" y="56" width="1" height="1" fill="#0000ff"/><rect x="278" y="56" width="1" height="1" fill="#000080"/><rect x="279" y="56" width="3" height="1" fill="#0000ff"/><rect x="282" y="56" width="1" height="1" fill="#000080"/><rect x="283" y="56" width="1" height="1" fill="#0000ff"/><rect x="284" y="56" width="1" height="1" fill="#000080"/><rect x="285" y="56" width="1" height="1" fill="#000"/><rect x="276" y="57" width="9" height="1" fill="#000080"/><rect x="285" y="57" width="1" height="1" fill="#000"/><rect x="276" y="58" width="1" height="1" fill="#000080"/><rect x="277" y="58" width="7" height="1" fill="#fff"/><rect x="284" y="58" width="1" height="1" fill="#000080"/><rect x="285" y="58" width="1" height="1" fill="#000"/><rect x="276" y="59" width="1" height="1" fill="#000080"/><rect x="277" y="59" width="2" height="1" fill="#fff"/><rect x="279" y="59" width="1" height="1" fill="#800000"/><rect x="280" y="59" width="1" height="1" fill="#fff"/><rect x="281" y="59" width="2" height="1" fill="#800000"/><rect x="283" y="59" width="1" height="1" fill="#fff"/><rect x="284" y="59" width="1" height="1" fill="#000080"/><rect x="285" y="59" width="1" height="1" fill="#000"/><rect x="276" y="60" width="1" height="1" fill="#000080"/><rect x="277" y="60" width="1" height="1" fill="#fff"/><rect x="278" y="60" width="2" height="1" fill="#800000"/><rect x="280" y="60" width="3" height="1" fill="#fff"/><rect x="283" y="60" width="1" height="1" fill="#800000"/><rect x="284" y="60" width="1" height="1" fill="#000080"/><rect x="285" y="60" width="1" height="1" fill="#000"/><rect x="276" y="61" width="1" height="1" fill="#000080"/><rect x="277" y="61" width="2" height="1" fill="#fff"/><rect x="279" y="61" width="1" height="1" fill="#800000"/><rect x="280" y="61" width="2" height="1" fill="#fff"/><rect x="282" y="61" width="1" height="1" fill="#800000"/><rect x="283" y="61" width="1" height="1" fill="#fff"/><rect x="284" y="61" width="1" height="1" fill="#000080"/><rect x="285" y="61" width="4" height="1" fill="#000"/><rect x="276" y="62" width="1" height="1" fill="#000080"/><rect x="277" y="62" width="2" height="1" fill="#fff"/><rect x="279" y="62" width="1" height="1" fill="#800000"/><rect x="280" y="62" width="1" height="1" fill="#fff"/><rect x="281" y="62" width="3" height="1" fill="#800000"/><rect x="284" y="62" width="1" height="1" fill="#000"/><rect x="285" y="62" width="1" height="1" fill="#fff"/><rect x="286" y="62" width="1" height="1" fill="#000"/><rect x="287" y="62" width="1" height="1" fill="#fff"/><rect x="288" y="62" width="1" height="1" fill="#ffff00"/><rect x="289" y="62" width="1" height="1" fill="#000"/><rect x="276" y="63" width="1" height="1" fill="#000080"/><rect x="277" y="63" width="6" height="1" fill="#fff"/><rect x="283" y="63" width="1" height="1" fill="#000"/><rect x="284" y="63" width="1" height="1" fill="#fff"/><rect x="285" y="63" width="1" height="1" fill="#ffff00"/><rect x="286" y="63" width="1" height="1" fill="#000"/><rect x="287" y="63" width="1" height="1" fill="#ffff00"/><rect x="288" y="63" width="1" height="1" fill="#fff"/><rect x="289" y="63" width="1" height="1" fill="#ffff00"/><rect x="290" y="63" width="1" height="1" fill="#000"/><rect x="276" y="64" width="6" height="1" fill="#000080"/><rect x="282" y="64" width="1" height="1" fill="#000"/><rect x="283" y="64" width="1" height="1" fill="#fff"/><rect x="284" y="64" width="1" height="1" fill="#ffff00"/><rect x="285" y="64" width="1" height="1" fill="#fff"/><rect x="286" y="64" width="1" height="1" fill="#000"/><rect x="287" y="64" width="1" height="1" fill="#fff"/><rect x="288" y="64" width="1" height="1" fill="#ffff00"/><rect x="289" y="64" width="1" height="1" fill="#fff"/><rect x="290" y="64" width="1" height="1" fill="#ffff00"/><rect x="291" y="64" width="1" height="1" fill="#000"/><rect x="277" y="65" width="6" height="1" fill="#000"/><rect x="283" y="65" width="1" height="1" fill="#ffff00"/><rect x="284" y="65" width="1" height="1" fill="#fff"/><rect x="285" y="65" width="1" height="1" fill="#ffff00"/><rect x="286" y="65" width="4" height="1" fill="#000"/><rect x="290" y="65" width="1" height="1" fill="#fff"/><rect x="291" y="65" width="1" height="1" fill="#000"/><rect x="282" y="66" width="1" height="1" fill="#000"/><rect x="283" y="66" width="1" height="1" fill="#fff"/><rect x="284" y="66" width="1" height="1" fill="#ffff00"/><rect x="285" y="66" width="1" height="1" fill="#fff"/><rect x="286" y="66" width="1" height="1" fill="#ffff00"/><rect x="287" y="66" width="1" height="1" fill="#fff"/><rect x="288" y="66" width="1" height="1" fill="#ffff00"/><rect x="289" y="66" width="1" height="1" fill="#fff"/><rect x="290" y="66" width="1" height="1" fill="#ffff00"/><rect x="291" y="66" width="1" height="1" fill="#000"/><rect x="283" y="67" width="1" height="1" fill="#000"/><rect x="284" y="67" width="1" height="1" fill="#fff"/><rect x="285" y="67" width="1" height="1" fill="#ffff00"/><rect x="286" y="67" width="1" height="1" fill="#fff"/><rect x="287" y="67" width="1" height="1" fill="#ffff00"/><rect x="288" y="67" width="1" height="1" fill="#fff"/><rect x="289" y="67" width="1" height="1" fill="#ffff00"/><rect x="290" y="67" width="1" height="1" fill="#000"/><rect x="284" y="68" width="1" height="1" fill="#000"/><rect x="285" y="68" width="1" height="1" fill="#fff"/><rect x="286" y="68" width="1" height="1" fill="#ffff00"/><rect x="287" y="68" width="1" height="1" fill="#fff"/><rect x="288" y="68" width="1" height="1" fill="#ffff00"/><rect x="289" y="68" width="1" height="1" fill="#000"/><rect x="285" y="69" width="4" height="1" fill="#000"/></svg>
<div class="a" style="left:5px;top:77px;width:963px;height:1px;background:#9a9ca2"></div>
<div class="a" style="left:5px;top:78px;width:963px;height:1px;background:#83868c"></div>
<div class="a" style="left:5px;top:77px;width:1px;height:621px;background:#a8a8b0"></div>
<div class="a" style="left:6px;top:78px;width:1px;height:620px;background:#85888e"></div>
<div class="a" style="left:7px;top:79px;width:962px;height:620px;background:#fff"></div>
<div class="a" id="edit"><div class="a" id="txt">105,  cheetah,    cheetah,    car,  CHEETAH,    CHEETAH,          executive,  10, 7,      0,    160, 0.7
106,  ambulan,    ambulan,    car,  AMBULAN,    AMBULAN,          ignore,           1,    7,    0,    162, 0.9
107,  fbicar,     fbicar,     car,  FBICAR,     FBICAR,           ignore,           1,    7,    0,    161, 0.7
108,  moonbeam,   moonbeam,   car,  MOONBEAM,   MOONBM,           poorfamily, 10, 7,      0,    162, 0.7
109,  esperant,   esperant,   car,  ESPERANT,   ESPERAN,          poorfamily, 10, 7,      0,    163, 0.64
110,  taxi,             taxi,             car,  TAXI,             TAXI,                   taxi,       20, 7,      1f
111,  kuruma,     kuruma,     car,  KURUMA,     KURUMA,           richfamily, 10, 7,      0,    161, 0.7
112,  bobcat,     bobcat,     car,  BOBCAT,     BOBCAT,           worker,     10, 7,      0,    164, 0.7
113,  mrwhoop,    mrwhoop,    car,  MRWHOOP,    WHOOPEE,          special,    3,    4,    0,    162, 0.7
114,  bfinject,   bfinject,   car,  BFINJECT,   BFINJC,                 ignore,           1,    4,    0,    164, 0.9
115,  corpse,     corpse,     car,  MANANA,     MANANA,           ignore,           1,  7,      0,    161, 0.7
116,  police,     police,     car,  POLICE,     POLICAR,          ignore,           1,    7,    0,    161, 0.7
117,  enforcer,   enforcer,   car,  ENFORCER,   ENFORCR,          ignore,           1,    7,    0,    165, 0.9
118,  securica,   securica,   car,  SECURICA,   SECURI,           big,        6,    7,    0,    165, 0.85
119,  banshee,    banshee,    car,  BANSHEE,    BANSHEE,          executive,  10, 7,      0,    160, 0.7
120,  predator,   predator,   boat, PREDATOR,   PREDATR,          ignore,           1,    7,    0
121,  bus,        bus,        car,  BUS,        BUS,              big,        10, 7,      0,    165, 0.9
122,  rhino,            rhino,            car,  RHINO,            RHINO,                  ignore,           1,    7,    0,
123,  barracks,   barracks,   car,  BARRACKS,   BARRCKS,          ignore,           1,    7,    0,    165, 1.2
124,  train,            train,            train,      TRAIN,            TRAIN,                  ignore,           1,    7,
125,  chopper,    chopper,    heli, HELI,             HELI,             ignore,           1,    7,    0
126,  dodo,             dodo,             car,  DODO,             DODO,             ignore,           1,    7,    0,    16
127,  coach,            coach,            car,  COACH,            COACH,                  big,        10, 7,      0,    16
128,  cabbie,     cabbie,     car,  CABBIE,     CABBIE,           taxi,       10, 7,      0,    163, 0.7
129,  stallion,   stallion,   car,  STALLION,   STALION,          poorfamily, 10, 7,      2ff0, 163, 0.7
130,  rumpo,            rumpo,            car,  RUMPO,            RUMPO,                  poorfamily, 10,   6,    0,    16
131,  rcbandit,   rcbandit,   car,  RCBANDIT,   RCBANDT,          ignore,           1,    7,    0,    160, 0.25
132,  bellyup,    bellyup,    car,  BELLYUP,    BELLYUP,          ignore,           1,    7,    0,    165, 0.76
133,  mrwongs,    mrwongs,    car,  MRWONGS,    MRWONGS,          ignore,           1,    7,    0,    165, 0.76
134,  mafia,            mafia,            car,  MAFIA,            MAFIACR,          ignore,           1,    7,    0,    16
135,  yardie,     yardie,     car,  YARDIE,     YARDICR,          ignore,           1,    7,    0,    164, 0.73
136,  yakuza,     yakuza,     car,  YAKUZA,     YAKUZCR,          ignore,           1,    7,    0,    160, 0.7
137,  diablos,    diablos,    car,  DIABLOS,    DIABLCR,          ignore,           1,    7,    0,    163, 0.7
138,  columb,     columb,     car,  COLUMB,     COLOMCR,          ignore,           1,    7,    0,    164, 0.85
139,  hoods,            hoods,            car,  HOODS,            HOODSCR,          ignore,           1,    7,    1ff0, 16
140,  airtrain,   airtrain,   plane,      AIRTRAIN,   AEROPL,           ignore,           1,    7,    0,    198
141,  deaddodo,   deaddodo,   plane,      DEADDODO,   DODO,             ignore,           1,    7,    0,    -1
142,  speeder,    speeder,    boat, SPEEDER,    SPEEDER,          ignore,           1,    7,    0</div>
<!--ZMASK--><svg class="a" style="left:0;top:0" width="944" height="602" fill="#fff"><rect x="25" y="10.5" width="2" height="2.8"/><rect x="649" y="10.5" width="2" height="2.8"/><rect x="737" y="10.5" width="2" height="2.8"/><rect x="801" y="10.5" width="2" height="2.8"/><rect x="825" y="10.5" width="2" height="2.8"/><rect x="25" y="26.5" width="2" height="2.8"/><rect x="785" y="26.5" width="2" height="2.8"/><rect x="873" y="26.5" width="2" height="2.8"/><rect x="25" y="42.5" width="2" height="2.8"/><rect x="785" y="42.5" width="2" height="2.8"/><rect x="873" y="42.5" width="2" height="2.8"/><rect x="25" y="58.5" width="2" height="2.8"/><rect x="649" y="58.5" width="2" height="2.8"/><rect x="737" y="58.5" width="2" height="2.8"/><rect x="825" y="58.5" width="2" height="2.8"/><rect x="25" y="74.5" width="2" height="2.8"/><rect x="649" y="74.5" width="2" height="2.8"/><rect x="737" y="74.5" width="2" height="2.8"/><rect x="825" y="74.5" width="2" height="2.8"/><rect x="33" y="90.5" width="2" height="2.8"/><rect x="841" y="90.5" width="2" height="2.8"/><rect x="649" y="106.5" width="2" height="2.8"/><rect x="737" y="106.5" width="2" height="2.8"/><rect x="825" y="106.5" width="2" height="2.8"/><rect x="649" y="122.5" width="2" height="2.8"/><rect x="737" y="122.5" width="2" height="2.8"/><rect x="825" y="122.5" width="2" height="2.8"/><rect x="737" y="138.5" width="2" height="2.8"/><rect x="825" y="138.5" width="2" height="2.8"/><rect x="833" y="154.5" width="2" height="2.8"/><rect x="921" y="154.5" width="2" height="2.8"/><rect x="785" y="170.5" width="2" height="2.8"/><rect x="873" y="170.5" width="2" height="2.8"/><rect x="785" y="186.5" width="2" height="2.8"/><rect x="873" y="186.5" width="2" height="2.8"/><rect x="785" y="202.5" width="2" height="2.8"/><rect x="873" y="202.5" width="2" height="2.8"/><rect x="737" y="218.5" width="2" height="2.8"/><rect x="825" y="218.5" width="2" height="2.8"/><rect x="649" y="234.5" width="2" height="2.8"/><rect x="737" y="234.5" width="2" height="2.8"/><rect x="801" y="234.5" width="2" height="2.8"/><rect x="825" y="234.5" width="2" height="2.8"/><rect x="33" y="250.5" width="2" height="2.8"/><rect x="785" y="250.5" width="2" height="2.8"/><rect x="649" y="266.5" width="2" height="2.8"/><rect x="737" y="266.5" width="2" height="2.8"/><rect x="825" y="266.5" width="2" height="2.8"/><rect x="785" y="298.5" width="2" height="2.8"/><rect x="833" y="330.5" width="2" height="2.8"/><rect x="929" y="346.5" width="2" height="2.8"/><rect x="841" y="362.5" width="2" height="2.8"/><rect x="929" y="362.5" width="2" height="2.8"/><rect x="649" y="378.5" width="2" height="2.8"/><rect x="737" y="378.5" width="2" height="2.8"/><rect x="825" y="378.5" width="2" height="2.8"/><rect x="649" y="394.5" width="2" height="2.8"/><rect x="761" y="394.5" width="2" height="2.8"/><rect x="825" y="394.5" width="2" height="2.8"/><rect x="33" y="410.5" width="2" height="2.8"/><rect x="841" y="410.5" width="2" height="2.8"/><rect x="929" y="410.5" width="2" height="2.8"/><rect x="785" y="426.5" width="2" height="2.8"/><rect x="849" y="426.5" width="2" height="2.8"/><rect x="873" y="426.5" width="2" height="2.8"/><rect x="785" y="442.5" width="2" height="2.8"/><rect x="873" y="442.5" width="2" height="2.8"/><rect x="785" y="458.5" width="2" height="2.8"/><rect x="873" y="458.5" width="2" height="2.8"/><rect x="929" y="474.5" width="2" height="2.8"/><rect x="785" y="490.5" width="2" height="2.8"/><rect x="873" y="490.5" width="2" height="2.8"/><rect x="785" y="506.5" width="2" height="2.8"/><rect x="849" y="506.5" width="2" height="2.8"/><rect x="873" y="506.5" width="2" height="2.8"/><rect x="785" y="522.5" width="2" height="2.8"/><rect x="873" y="522.5" width="2" height="2.8"/><rect x="785" y="538.5" width="2" height="2.8"/><rect x="873" y="538.5" width="2" height="2.8"/><rect x="953" y="554.5" width="2" height="2.8"/><rect x="33" y="570.5" width="2" height="2.8"/><rect x="833" y="570.5" width="2" height="2.8"/><rect x="833" y="586.5" width="2" height="2.8"/><rect x="785" y="602.5" width="2" height="2.8"/></svg>
<div class="a" style="left:782px;top:402px;width:68px;height:3px;background:#f00;border-radius:1.5px"></div>
</div>
<div class="a" style="left:951px;top:79px;width:17px;height:602px;background:linear-gradient(to right,#e9e9e9 0,#f4f4f4 35%,#fdfdfd 90%,#e2e6ec 95%,#e2e6ec 100%)"></div><svg class="a" style="left:951px;top:79px" width="17" height="17" viewBox="0 0 17 17"><defs><linearGradient id="ag" x1="0" y1="0" x2="1" y2="0"><stop offset="0" stop-color="#1a1a1a"/><stop offset="1" stop-color="#8a8a8a"/></linearGradient></defs><path d="M4 9 L7.5 5 L11 9 Z" fill="url(#ag)"/></svg><svg class="a" style="left:951px;top:664px" width="17" height="17" viewBox="0 0 17 17"><path d="M4 7 L11 7 L7.5 11 Z" fill="url(#ag)"/></svg><div class="a" style="left:952px;top:279px;width:14px;height:89px;border:1px solid #b0b0b0;border-radius:2px;box-shadow:inset 0 0 0 1px #fbfbfb;background:linear-gradient(to right,#f3f3f3 0,#e9e9e9 49%,#dadada 50%,#cfcfcf 100%)"></div><div class="a" style="left:956px;top:319px;width:7px;height:1px;background:linear-gradient(to right,#222,#999)"></div><div class="a" style="left:956px;top:320px;width:7px;height:1px;background:#fafafa"></div><div class="a" style="left:956px;top:322px;width:7px;height:1px;background:linear-gradient(to right,#222,#999)"></div><div class="a" style="left:956px;top:323px;width:7px;height:1px;background:#fafafa"></div><div class="a" style="left:956px;top:325px;width:7px;height:1px;background:linear-gradient(to right,#222,#999)"></div><div class="a" style="left:956px;top:326px;width:7px;height:1px;background:#fafafa"></div><div class="a" style="left:7px;top:681px;width:944px;height:17px;background:linear-gradient(to bottom,#e9e9e9 0,#f4f4f4 35%,#fdfdfd 90%,#e2e6ec 95%,#e2e6ec 100%)"></div><svg class="a" style="left:7px;top:681px" width="17" height="17" viewBox="0 0 17 17"><defs><linearGradient id="ah" x1="0" y1="0" x2="0" y2="1"><stop offset="0" stop-color="#1a1a1a"/><stop offset="1" stop-color="#8a8a8a"/></linearGradient></defs><path d="M9 3.7 L9 11.3 L5 7.5 Z" fill="url(#ah)"/></svg><svg class="a" style="left:934px;top:681px" width="17" height="17" viewBox="0 0 17 17"><path d="M7 3.7 L7 11.3 L11 7.5 Z" fill="url(#ah)"/></svg><div class="a" style="left:24px;top:682px;width:801px;height:14px;border:1px solid #b0b0b0;border-radius:2px;box-shadow:inset 0 0 0 1px #fbfbfb;background:linear-gradient(to bottom,#f3f3f3 0,#e9e9e9 49%,#dadada 50%,#cfcfcf 100%)"></div><div class="a" style="left:420px;top:686px;width:1px;height:7px;background:linear-gradient(to bottom,#222,#999)"></div><div class="a" style="left:421px;top:686px;width:1px;height:7px;background:#fafafa"></div><div class="a" style="left:423px;top:686px;width:1px;height:7px;background:linear-gradient(to bottom,#222,#999)"></div><div class="a" style="left:424px;top:686px;width:1px;height:7px;background:#fafafa"></div><div class="a" style="left:426px;top:686px;width:1px;height:7px;background:linear-gradient(to bottom,#222,#999)"></div><div class="a" style="left:427px;top:686px;width:1px;height:7px;background:#fafafa"></div><div class="a" style="left:951px;top:681px;width:17px;height:17px;background:#f0f0f0;border-right:1px solid #e2e6ec;border-bottom:1px solid #e2e6ec"></div>
<div class="a" style="left:5px;top:699px;width:964px;height:18px;background:linear-gradient(to bottom,#d4d4d4 0,#d4d4d4 1px,#f3f3f3 1px,#f1f1f1 50%,#ebebeb 100%)"></div><div class="a" style="left:7px;top:703px;height:13px;line-height:13px;font-size:11px;white-space:pre;-webkit-text-stroke:0.15px #000">Для вывода справки нажмите <span style="letter-spacing:0.8px">&lt;F1&gt;</span></div><div class="a" style="left:919px;top:703px;width:1px;height:12px;background:#d0d0d6"></div><div class="a" style="left:949px;top:703px;width:1px;height:12px;background:#d0d0d6"></div><div class="a" style="left:966px;top:706px;width:2px;height:2px;background:#fff"></div><div class="a" style="left:965px;top:705px;width:2px;height:2px;background:#b8b8c0"></div><div class="a" style="left:962px;top:710px;width:2px;height:2px;background:#fff"></div><div class="a" style="left:961px;top:709px;width:2px;height:2px;background:#b8b8c0"></div><div class="a" style="left:966px;top:710px;width:2px;height:2px;background:#fff"></div><div class="a" style="left:965px;top:709px;width:2px;height:2px;background:#b8b8c0"></div><div class="a" style="left:958px;top:714px;width:2px;height:2px;background:#fff"></div><div class="a" style="left:957px;top:713px;width:2px;height:2px;background:#b8b8c0"></div><div class="a" style="left:962px;top:714px;width:2px;height:2px;background:#fff"></div><div class="a" style="left:961px;top:713px;width:2px;height:2px;background:#b8b8c0"></div><div class="a" style="left:966px;top:714px;width:2px;height:2px;background:#fff"></div><div class="a" style="left:965px;top:713px;width:2px;height:2px;background:#b8b8c0"></div>
</div></body></html>
